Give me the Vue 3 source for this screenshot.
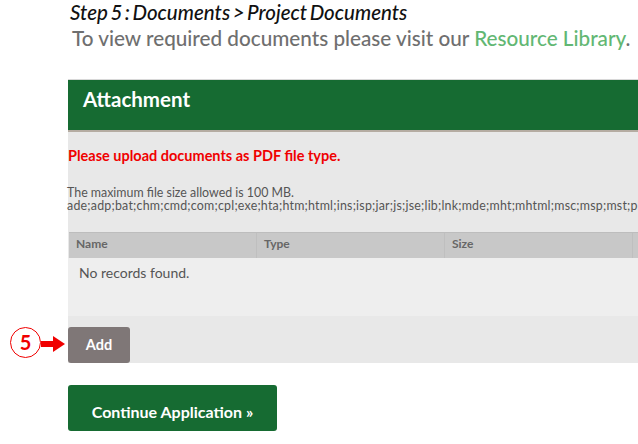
<script setup>
const columns = [
  { label: 'Name', width: '188px' },
  { label: 'Type', width: '188px' },
  { label: 'Size', width: '188px' },
  { label: '', width: '6px' }
]
</script>

<template>
  <div class="page">
    <div class="heading">
      <div class="step">Step 5 : Documents &gt; Project Documents</div>
      <div class="hint">To view required documents please visit our <span class="link">Resource Library</span>.</div>
    </div>
    <section class="panel">
      <h2 class="panel-title">Attachment</h2>
      <div class="panel-body">
        <p class="warning">Please upload documents as PDF file type.</p>
        <p class="limits">The maximum file size allowed is 100 MB.<br><span class="types">ade;adp;bat;chm;cmd;com;cpl;exe;hta;htm;html;ins;isp;jar;js;jse;lib;lnk;mde;mht;mhtml;msc;msp;mst;php;pif;scr;sct;shb;sys;vb;vbe;vbs;vxd;wsc;wsf;wsh</span></p>
        <div class="table">
          <div class="thead">
            <div v-for="c in columns" :key="c.label" class="th" :style="{ width: c.width }">{{ c.label }}</div>
          </div>
          <div class="empty">No records found.</div>
        </div>
        <div class="actions">
          <button class="add">Add</button>
          <span class="callout">
            <span class="badge">5</span>
            <svg class="arrow" width="24" height="16" viewBox="0 0 24 16"><path d="M0 5H12V0L24 8 12 16V11H0Z" fill="#f00000"/></svg>
          </span>
        </div>
      </div>
    </section>
    <button class="continue">Continue Application »</button>
  </div>
</template>

<style>
html, body { margin: 0; background: #fff; overflow: hidden; }
</style>

<style scoped>
.page {
  width: 638px;
  height: 444px;
  overflow: hidden;
  box-sizing: border-box;
  padding-left: 68px;
  font-family: Lato, "Open Sans", sans-serif;
}
.heading { height: 79px; }
.step {
  padding: 2px 0 0 2px;
  height: 21px;
  line-height: 21px;
  font-size: 20.5px;
  font-style: italic;
  font-weight: 500;
  color: #111;
  word-spacing: -2.2px;
  white-space: nowrap;
}
.hint {
  padding-left: 4px;
  line-height: 30px;
  font-size: 20.7px;
  font-weight: 500;
  color: #6f6f6f;
  white-space: nowrap;
}
.link { color: #62b773; }
.panel { width: 570px; border-top: 1px solid #d8d8d8; }
.panel-title {
  margin: 0;
  height: 43px;
  box-sizing: content-box;
  padding: 7px 0 0 15px;
  line-height: 24px;
  font-size: 20.5px;
  font-weight: 700;
  color: #fff;
  background: #166b32;
  border-bottom: 2px solid #b5aca2;
}
.panel-body { background: #e8e8e8; height: 231px; position: relative; }
.warning {
  margin: 0;
  padding-top: 15px;
  line-height: 18px;
  font-size: 14.5px;
  font-weight: 700;
  color: #f00000;
  white-space: nowrap;
}
.limits {
  margin: 0 0 0 -1px;
  padding-top: 21px;
  line-height: 13px;
  font-size: 12.4px;
  color: #555;
  white-space: nowrap;
}
.types { letter-spacing: 0.22px; }
.table { margin-top: 20px; }
.thead {
  display: flex;
  height: 26px;
  background: #c8c8c8;
  border-top: 1px solid #bdbdbd;
  box-sizing: border-box;
  margin-left: 1px;
}
.th {
  flex: none;
  box-sizing: border-box;
  padding-left: 7px;
  line-height: 22px;
  font-size: 12px;
  font-weight: 700;
  color: #666;
  border-right: 1px solid #bfbfbf;
}
.empty {
  height: 58px;
  box-sizing: border-box;
  padding: 7px 0 0 11px;
  line-height: 16px;
  font-size: 14px;
  color: #555;
  background: #eeeeee;
}
.actions { margin-top: 11px; position: relative; }
.add {
  display: block;
  width: 62px;
  height: 36px;
  border: 0;
  border-radius: 3px;
  padding: 0 0 2px;
  background: #7f7777;
  color: #fff;
  font-family: inherit;
  font-size: 14.5px;
  font-weight: 700;
}
.callout {
  position: absolute;
  left: -58px;
  top: 0;
  display: flex;
  align-items: center;
}
.badge {
  width: 31px;
  height: 31px;
  box-sizing: border-box;
  border: 1px solid #f00000;
  border-radius: 50%;
  background: #fff;
  color: #f00000;
  text-align: center;
  line-height: 29px;
  font-size: 20px;
  font-weight: 700;
}
.arrow { display: block; margin-top: 3px; }
.continue {
  display: block;
  margin-top: 22px;
  width: 209px;
  height: 46px;
  border: 0;
  border-radius: 3px;
  padding: 6px 0 0;
  background: #166b32;
  color: #fff;
  font-family: inherit;
  font-size: 16px;
  font-weight: 700;
}
</style>
